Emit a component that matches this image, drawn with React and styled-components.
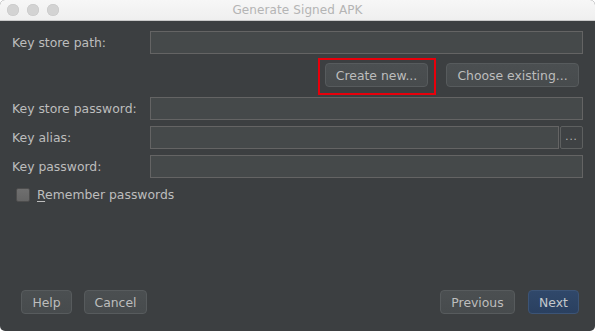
import styled, { createGlobalStyle } from "styled-components";

const Global = createGlobalStyle`
  html, body { margin: 0; padding: 0; background: #ffffff; }
  body { font-family: "DejaVu Sans", "Liberation Sans", sans-serif; }
`;

const Window = styled.div`
  width: 595px;
  height: 331px;
  box-sizing: border-box;
  border-radius: 5px;
  overflow: hidden;
  background: #3c3f41;
  display: flex;
  flex-direction: column;
`;

const TitleBar = styled.div`
  height: 21px;
  flex: none;
  position: relative;
  display: flex;
  align-items: center;
  justify-content: center;
  background: linear-gradient(#f7f7f7, #efefef);
  border-bottom: 1px solid #c9c9c9;
  box-sizing: border-box;
`;

const Lights = styled.div`
  position: absolute;
  left: 7px;
  top: 4px;
  display: flex;
  gap: 8px;
`;

const Light = styled.span`
  width: 12px;
  height: 12px;
  border-radius: 50%;
  background: #d3d3d3;
  box-shadow: inset 0 0 0 0.5px #c6c6c6;
`;

const Title = styled.div`
  font-size: 12px;
  color: #b4b4b4;
  letter-spacing: 0.1px;
`;

const Body = styled.div`
  flex: 1;
  display: flex;
  flex-direction: column;
  padding: 10px 12px 17px 12px;
`;

const Row = styled.div`
  display: grid;
  grid-template-columns: 138px 1fr;
  align-items: center;
  margin-top: ${(p) => p.$mt || 0}px;
`;

const Label = styled.label`
  font-size: 12.4px;
  color: #bdbdbd;
`;

const Field = styled.div`
  height: 23px;
  box-sizing: border-box;
  background: #45494a;
  border: 1px solid #646464;
  flex: 1;
`;

const FieldWithButton = styled.div`
  display: flex;
  gap: 1px;
`;

const DotsButton = styled.div`
  width: 23px;
  height: 23px;
  box-sizing: border-box;
  border: 1px solid #5e6060;
  border-radius: 2px;
  background: #3f4244;
  color: #bbbbbb;
  font-size: 10px;
  display: flex;
  align-items: center;
  justify-content: center;
  letter-spacing: 1px;
  padding-bottom: 3px;
`;

const ButtonRow = styled.div`
  display: flex;
  justify-content: ${(p) => p.$justify || "flex-end"};
  gap: ${(p) => p.$gap || 12}px;
  padding: ${(p) => p.$pad || "0"};
  margin-top: ${(p) => p.$mt || 0}px;
`;

const Group = styled.div`
  display: flex;
  gap: ${(p) => p.$gap || 12}px;
`;

const Button = styled.div`
  width: ${(p) => p.$w}px;
  height: 24px;
  box-sizing: border-box;
  border-radius: 4px;
  border: 1px solid ${(p) => (p.$primary ? "#3c5476" : "#575b5d")};
  background: ${(p) =>
    p.$primary
      ? "linear-gradient(#30486a, #2a4060)"
      : "linear-gradient(#4b4f51, #474b4d)"};
  color: ${(p) => (p.$primary ? "#c4c8cc" : "#bdbdbd")};
  font-size: 12.4px;
  display: flex;
  align-items: center;
  justify-content: center;
  white-space: nowrap;
`;

const Highlight = styled.div`
  position: relative;
  &::after {
    content: "";
    position: absolute;
    left: -7px;
    right: -8px;
    top: -5px;
    bottom: -8px;
    border: 2px solid #e8000b;
    pointer-events: none;
  }
`;

const CheckRow = styled.div`
  display: flex;
  align-items: center;
  gap: 7px;
  margin-top: 9px;
  padding-left: 4px;
`;

const Box = styled.span`
  width: 14px;
  height: 14px;
  box-sizing: border-box;
  border-radius: 2px;
  border: 1px solid #4d4d4d;
  background: linear-gradient(#6f6f6f, #656565);
`;

const CheckText = styled.span`
  font-size: 12.4px;
  color: #bdbdbd;
  & u { text-underline-offset: 2px; }
`;

const Spacer = styled.div`
  flex: 1;
`;

export default function App() {
  return (
    <>
      <Global />
      <Window>
        <TitleBar>
          <Lights>
            <Light />
            <Light />
            <Light />
          </Lights>
          <Title>Generate Signed APK</Title>
        </TitleBar>
        <Body>
          <Row>
            <Label>Key store path:</Label>
            <Field />
          </Row>
          <ButtonRow $gap={18} $pad="0 4px 0 0" $mt={9}>
            <Highlight>
              <Button $w={103}>Create new...</Button>
            </Highlight>
            <Button $w={133}>Choose existing...</Button>
          </ButtonRow>
          <Row $mt={10}>
            <Label>Key store password:</Label>
            <Field />
          </Row>
          <Row $mt={6}>
            <Label>Key alias:</Label>
            <FieldWithButton>
              <Field />
              <DotsButton>...</DotsButton>
            </FieldWithButton>
          </Row>
          <Row $mt={6}>
            <Label>Key password:</Label>
            <Field />
          </Row>
          <CheckRow>
            <Box />
            <CheckText>
              <u>R</u>emember passwords
            </CheckText>
          </CheckRow>
          <Spacer />
          <ButtonRow $justify="space-between" $pad="0 4px 0 9px">
            <Group $gap={12}>
              <Button $w={51}>Help</Button>
              <Button $w={63}>Cancel</Button>
            </Group>
            <Group $gap={13}>
              <Button $w={75}>Previous</Button>
              <Button $w={51} $primary>
                Next
              </Button>
            </Group>
          </ButtonRow>
        </Body>
      </Window>
    </>
  );
}
